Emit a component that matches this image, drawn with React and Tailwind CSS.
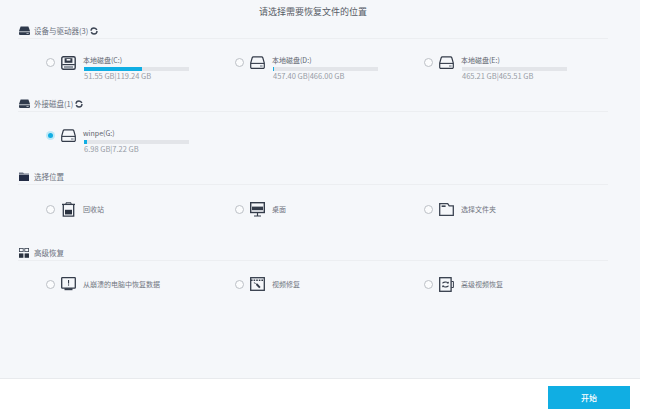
import React from "react";

const DiskSolid = () => (
  <svg width="11" height="9" viewBox="0 0 11 9" className="shrink-0 ml-[1px]">
    <path d="M1.6.5h7.8L11 5v3a1 1 0 0 1-1 1H1a1 1 0 0 1-1-1V5z" fill="#2f3a4c" />
    <rect x="0" y="5.4" width="11" height="0.8" fill="#e8ebef" />
    <rect x="7.5" y="7" width="2.2" height="0.9" fill="#b9bec7" />
  </svg>
);

const Spinner = () => (
  <svg width="8" height="8" viewBox="0 0 8 8" className="shrink-0">
    <circle cx="4" cy="4" r="3" fill="none" stroke="#3c4554" strokeWidth="1.4" strokeDasharray="8 1.4" />
  </svg>
);

const FolderSolid = () => (
  <svg width="10" height="9" viewBox="0 0 10 9" className="shrink-0 ml-[1px]">
    <path d="M0 1.6V.5h4l1 1h5v1H0z" fill="#6b7383" />
    <path d="M0 2.8h10V9H0z" fill="#232c45" />
  </svg>
);

const GridSolid = () => (
  <svg width="10" height="10" viewBox="0 0 10 10" className="shrink-0 ml-[1px]">
    <rect x="0.4" y="0.4" width="3.8" height="3.2" fill="none" stroke="#3a4352" strokeWidth="0.8" />
    <rect x="5.8" y="0.4" width="3.8" height="3.2" fill="none" stroke="#3a4352" strokeWidth="0.8" />
    <rect x="0" y="5.4" width="4.4" height="4.4" fill="#2a3240" />
    <rect x="5.6" y="5.4" width="4.4" height="4.4" fill="#2a3240" />
  </svg>
);

const DriveC = () => (
  <svg width="15" height="14" viewBox="0 0 15 14">
    <rect x="0.8" y="0.8" width="13.4" height="12.4" rx="1.5" fill="#f5f7fa" stroke="#343c4a" strokeWidth="1.4" />
    <path d="M3.6 2.2h7.8v4.6H3.6z" fill="#343c4a" />
    <rect x="5.6" y="3" width="3.8" height="1.6" fill="#f5f7fa" />
    <rect x="1.2" y="8" width="12.6" height="1.2" fill="#343c4a" />
    <rect x="3" y="10.2" width="9" height="1.6" fill="#7d8592" />
  </svg>
);

const DriveOutline = () => (
  <svg width="15" height="13" viewBox="0 0 15 13">
    <path d="M3.4.8h8.2c.8 0 1 .4 1.2 1L14.3 7v4.2a1.2 1.2 0 0 1-1.2 1.2H1.9a1.2 1.2 0 0 1-1.2-1.2V7l1.5-5.2c.2-.6.4-1 1.2-1z" fill="none" stroke="#343c4a" strokeWidth="1.2" />
    <path d="M1 7.4h13" stroke="#343c4a" strokeWidth="1.1" />
    <rect x="10" y="9.4" width="2.6" height="1.2" fill="#7d8592" />
  </svg>
);

const Trash = () => (
  <svg width="13" height="15" viewBox="0 0 13 15">
    <path d="M4 2V.8h5V2" fill="none" stroke="#343c4a" strokeWidth="1" />
    <path d="M0 2.4h13" stroke="#343c4a" strokeWidth="1.3" />
    <path d="M1.3 2.4v11.8h10.4V2.4" fill="none" stroke="#343c4a" strokeWidth="1.3" />
    <rect x="3" y="7.8" width="7" height="4.6" fill="#2a3240" />
  </svg>
);

const Desktop = () => (
  <svg width="15" height="15" viewBox="0 0 15 15">
    <rect x="0.7" y="0.7" width="13.6" height="9.8" fill="none" stroke="#343c4a" strokeWidth="1.4" />
    <rect x="2" y="4.6" width="11" height="3.6" fill="#343c4a" />
    <path d="M7.5 10.5v3M4 14h7" stroke="#343c4a" strokeWidth="1.2" />
  </svg>
);

const Folder = () => (
  <svg width="15" height="13" viewBox="0 0 15 13">
    <path d="M.7.7h8l1.5 2.2h4.1v9.4H.7z" fill="none" stroke="#3c4452" strokeWidth="1.3" />
    <rect x="2.6" y="2.4" width="4" height="1.6" fill="#3c4452" />
  </svg>
);

const Monitor = () => (
  <svg width="15" height="14" viewBox="0 0 15 14">
    <rect x="0.7" y="0.7" width="13.6" height="10.4" rx="0.6" fill="none" stroke="#343c4a" strokeWidth="1.3" />
    <rect x="7" y="3" width="1.1" height="3.6" fill="#343c4a" />
    <rect x="7" y="7.4" width="1.1" height="1.2" fill="#343c4a" />
    <rect x="3.5" y="11.2" width="8" height="2" fill="#343c4a" />
  </svg>
);

const VideoRepair = () => (
  <svg width="15" height="14" viewBox="0 0 15 14">
    <rect x="0.7" y="0.7" width="13.6" height="12.6" fill="none" stroke="#343c4a" strokeWidth="1.3" />
    <path d="M1 3.2h13" stroke="#343c4a" strokeWidth="1.6" strokeDasharray="1.6 1" />
    <path d="M4.2 5.2l2.4 1.6.8-.3 3.2 3.4-1.4 1.4-3.2-3.4.2-.8-2.6-1.2z" fill="#343c4a" />
  </svg>
);

const VideoAdvanced = () => (
  <svg width="15" height="15" viewBox="0 0 15 15">
    <rect x="0.7" y="0.7" width="11.4" height="13.6" fill="none" stroke="#343c4a" strokeWidth="1.3" />
    <path d="M12.4 4.5h2v6h-2" fill="none" stroke="#343c4a" strokeWidth="1" />
    <path d="M3.6 6.4c.3-1.4 4-1.9 5.4-.6M9.4 8.6c-.3 1.4-4 1.9-5.4.6" fill="none" stroke="#343c4a" strokeWidth="1.1" />
    <path d="M9.8 4.4v2.2H7.6zM3.2 10.6V8.4h2.2z" fill="#343c4a" />
  </svg>
);

const Radio = ({ checked }) =>
  checked ? (
    <div className="w-[9px] h-[9px] shrink-0 rounded-full bg-[#bfe9f7] flex items-center justify-center">
      <div className="w-[5px] h-[5px] rounded-full bg-[#12aee3]" />
    </div>
  ) : (
    <div className="w-[9px] h-[9px] shrink-0 rounded-full bg-[#fbfcfd] border border-[#bcc0c6]" />
  );

const SectionHeader = ({ icon, title, spin, className }) => (
  <div className={`flex items-center h-[15px] w-[590px] ml-[18px] border-b border-[#eceef1] box-content ${className}`}>
    <div className="w-[16px] flex items-center">{icon}</div>
    <span className="text-[7.5px] text-[#6a707c]">{title}</span>
    {spin && <span className="ml-[2px] flex"><Spinner /></span>}
  </div>
);

const DriveItem = ({ icon, name, used, pct, checked }) => (
  <div className="flex items-start">
    <div className="flex items-center h-[13px] mt-[1px]">
      <Radio checked={checked} />
      <div className="w-[15px] ml-[6px] flex justify-center">{icon}</div>
    </div>
    <div className="ml-[8px] w-[105px] flex flex-col">
      <span className="-ml-[1px] text-[7px] leading-[10px] text-[#5c626c]">{name}</span>
      <div className="h-[4px] w-[105px] mt-[2px] bg-[#e3e5e9]">
        <div className="h-full bg-[#10aee3]" style={{ width: `${pct}%` }} />
      </div>
      <span className="text-[7.5px] leading-[10px] text-[#979ca5] whitespace-nowrap">{used}</span>
    </div>
  </div>
);

const PlaceItem = ({ icon, name }) => (
  <div className="flex items-center h-[16px]">
    <Radio />
    <div className="w-[15px] ml-[6px] flex justify-center">{icon}</div>
    <span className="ml-[7px] text-[7px] text-[#70757f] whitespace-nowrap">{name}</span>
  </div>
);

const rowClass = "grid grid-cols-[189px_189px_189px] pl-[46px]";

export default function App() {
  return (
    <div
      className="w-[647px] h-[415px] bg-white overflow-hidden flex flex-col"
      style={{ fontFamily: '"Noto Sans CJK SC", "Noto Sans", sans-serif' }}
    >
      <main className="w-[640px] h-[379px] bg-[#f5f7fa] border-b border-[#e8eaed]">
        <h1 className="h-[23px] pt-[5px] pr-[14px] text-center text-[9px] leading-[14px] font-normal text-[#555b65]">
          请选择需要恢复文件的位置
        </h1>

        <SectionHeader icon={<DiskSolid />} title="设备与驱动器(3)" spin />
        <div className={`${rowClass} mt-[16px]`}>
          <DriveItem icon={<DriveC />} name="本地磁盘(C:)" used="51.55 GB|119.24 GB" pct={55} />
          <DriveItem icon={<DriveOutline />} name="本地磁盘(D:)" used="457.40 GB|466.00 GB" pct={1} />
          <DriveItem icon={<DriveOutline />} name="本地磁盘(E:)" used="465.21 GB|465.51 GB" pct={0} />
        </div>

        <SectionHeader className="mt-[15px]" icon={<DiskSolid />} title="外接磁盘(1)" spin />
        <div className={`${rowClass} mt-[16px]`}>
          <DriveItem checked icon={<DriveOutline />} name="winpe(G:)" used="6.98 GB|7.22 GB" pct={3} />
        </div>

        <SectionHeader className="mt-[15px]" icon={<FolderSolid />} title="选择位置" />
        <div className={`${rowClass} mt-[16px]`}>
          <PlaceItem icon={<Trash />} name="回收站" />
          <PlaceItem icon={<Desktop />} name="桌面" />
          <PlaceItem icon={<Folder />} name="选择文件夹" />
        </div>

        <SectionHeader className="mt-[28px]" icon={<GridSolid />} title="高级恢复" />
        <div className={`${rowClass} mt-[15px]`}>
          <PlaceItem icon={<Monitor />} name="从崩溃的电脑中恢复数据" />
          <PlaceItem icon={<VideoRepair />} name="视频修复" />
          <PlaceItem icon={<VideoAdvanced />} name="高级视频恢复" />
        </div>
      </main>

      <footer className="flex justify-end pt-[7px] pr-[17px]">
        <button className="w-[82px] h-[23px] bg-[#10aee3] text-white text-[8px] font-medium">开始</button>
      </footer>
    </div>
  );
}
